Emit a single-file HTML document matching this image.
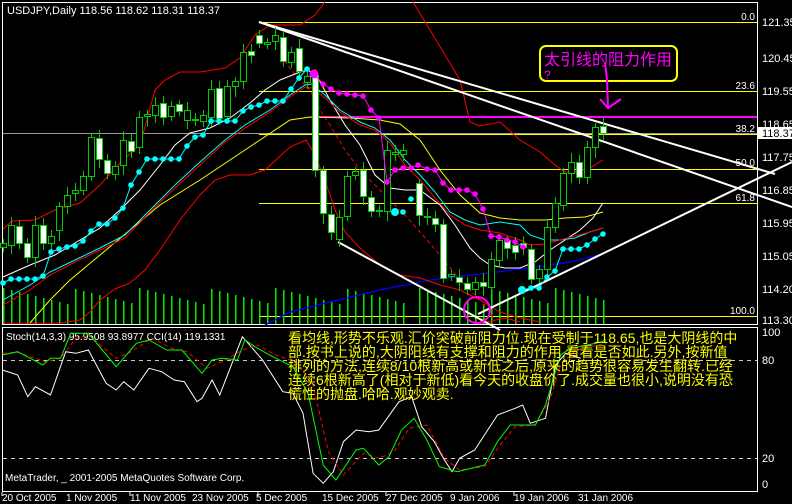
<!DOCTYPE html>
<html><head><meta charset="utf-8"><style>
body{margin:0;background:#000;width:792px;height:504px;overflow:hidden}
svg{display:block}
text{font-family:"Liberation Sans","Noto Sans CJK SC",sans-serif}
</style></head><body>
<svg id="s" width="792" height="504" viewBox="0 0 792 504" xmlns="http://www.w3.org/2000/svg">
<rect width="792" height="504" fill="#000"/>
<rect x="2.5" y="2.5" width="755" height="322" fill="none" stroke="#fff"/>
<rect x="2.5" y="327.5" width="755" height="164" fill="none" stroke="#fff"/>
<line x1="3" y1="133.5" x2="757" y2="133.5" stroke="#999"/>
<g stroke="#ff0" stroke-width="1">
<line x1="259" y1="22.5" x2="757" y2="22.5"/>
<line x1="259" y1="91.5" x2="757" y2="91.5"/>
<line x1="259" y1="134.5" x2="757" y2="134.5"/>
<line x1="259" y1="169.5" x2="757" y2="169.5"/>
<line x1="259" y1="203.5" x2="757" y2="203.5"/>
<line x1="259" y1="316.5" x2="757" y2="316.5"/>
</g>
<g fill="#fff" font-size="10" text-anchor="end">
<text x="755" y="20">0.0</text><text x="755" y="89">23.6</text><text x="755" y="132">38.2</text>
<text x="755" y="166">50.0</text><text x="755" y="201">61.8</text><text x="755" y="314">100.0</text>
</g>
<line x1="318" y1="117" x2="757" y2="117" stroke="#f0f" stroke-width="2"/>
<g id="vol" fill="#0e0"></g>
<polyline fill="none" stroke="#00f" stroke-width="1.3" points="265,325 290,312 330,302 380,290 430,280 480,274 530,268 570,262 603,254"/>
<g fill="none" stroke="#f00" stroke-width="1">
<polyline points="3,229 12,221 35,220 55,210 80,203 100,185 120,163 140,145 155,90 165,80 180,72 200,72 225,68 240,58 255,35 270,25 300,25 315,15 325,2"/>
<polyline points="413,2 430,30 445,55 460,80 470,122 480,126 500,122 520,140 540,152 555,165 565,172 575,172 590,168 603,160"/>
<polyline points="3,323 60,323 80,320 90,312 100,300 115,289 130,283 145,270 160,250 180,220 200,195 215,180 230,175 250,175 265,170 290,147 306,140 315,155 325,180 335,210 345,232 360,248 380,265 400,275 420,278 440,285 460,290 480,300 500,312 520,318 540,322"/>
<polyline points="478,324 505,318 520,322" />
<polyline points="280,55 295,75 310,90 320,110 330,125 345,150 360,170 375,185 390,200 405,215 420,232 440,255 460,280 480,300 495,320" stroke-dasharray="4,3"/>
</g>
<polyline fill="none" stroke="#ff0" points="30,323 50,300 70,280 100,255 130,230 160,205 200,180 230,160 260,140 290,120 310,117 350,118 380,120 400,124 420,140 440,170 460,195 480,213 500,218 520,220 545,220 565,218 585,217 603,212"/>
<polyline fill="none" stroke="#fff" points="3,277 30,265 55,255 80,240 100,228 120,210 140,190 160,165 175,145 190,133 210,128 230,118 250,103 265,90 280,80 300,72 308,70 318,78 330,100 345,125 360,145 375,175 390,188 405,190 420,190 440,205 455,225 470,248 480,258 490,265 505,268 520,268 535,262 550,250 565,240 580,230 593,218 603,203"/>
<polyline fill="none" stroke="#0ff" points="3,300 30,285 50,272 75,260 100,248 125,235 150,210 175,185 200,162 225,140 245,125 270,110 290,95 305,85 312,84 325,95 340,110 360,122 375,128 390,140 405,160 420,175 435,192 450,212 465,220 480,225 500,222 520,225 530,235 545,240 560,240 575,238 590,232 603,228"/>
<polyline fill="none" stroke="#f00" points="3,305 30,290 50,275 75,262 100,250 125,238 150,212 175,188 200,165 225,142 245,128 270,112 290,97 305,87 312,88 325,98 340,112 360,125 375,130 390,143 405,165 420,180 435,198 450,215 465,225 480,230 500,233 520,240 530,245 545,244 560,240 575,236 590,232 603,228"/>
<g stroke="#fff" stroke-width="2" fill="none">
<line x1="259" y1="22" x2="775" y2="174"/>
<line x1="259" y1="22" x2="792" y2="207"/>
<line x1="338" y1="242" x2="500" y2="330"/>
<line x1="478" y1="314" x2="792" y2="162"/>
</g>
<g id="cdl"></g>
<polyline fill="none" stroke="#0ff" id="cyl"/>
<g id="cyd" fill="#0ff"></g>
<polyline fill="none" stroke="#f0f" id="mgl"/>
<g id="mgd" fill="#f0f"></g>
<circle cx="477" cy="310" r="13" fill="none" stroke="#f0f" stroke-width="2"/>
<rect x="540" y="46" width="137" height="35" rx="6" fill="none" stroke="#ff0" stroke-width="2"/>
<text x="544" y="65" fill="#f0f" font-size="16" font-family="Liberation Sans,Noto Sans CJK SC,sans-serif">太引线的阻力作用</text>
<text x="544" y="79" fill="#f0f" font-size="12">?</text>
<polyline fill="none" stroke="#f0f" stroke-width="2" points="605,62 607,80 608,108"/>
<polyline fill="none" stroke="#f0f" stroke-width="2" points="600,99 608,108 621,99"/>
<g fill="#fff" font-size="11">
<text x="762" y="26">121.35</text><text x="762" y="62">120.45</text><text x="762" y="95">119.55</text>
<text x="762" y="128">118.65</text><text x="762" y="161">117.75</text><text x="762" y="194">116.85</text>
<text x="762" y="227">115.95</text><text x="762" y="260">115.05</text><text x="762" y="293">114.20</text>
<text x="762" y="324">113.30</text>
<text x="762" y="336">100</text><text x="762" y="364">80</text><text x="762" y="462">20</text><text x="762" y="488">0</text>
</g>
<rect x="758" y="127" width="34" height="12" fill="#fff"/>
<text x="762" y="137" fill="#000" font-size="11">118.37</text>
<text x="7" y="14" fill="#fff" font-size="11">USDJPY,Daily  118.56 118.62 118.31 118.37</text>
<g stroke="#ccc" stroke-dasharray="4,4"><line x1="3" y1="360.5" x2="757" y2="360.5"/><line x1="3" y1="458.5" x2="757" y2="458.5"/></g>
<text x="6" y="340" fill="#fff" font-size="10">Stoch(14,3,3) 95.9508 93.8977  CCI(14) 119.1331</text>
<polyline fill="none" stroke="#fff" id="cci"/>
<polyline fill="none" stroke="#f00" stroke-dasharray="4,3" id="sd"/>
<polyline fill="none" stroke="#0f0" id="sk"/>
<text x="5" y="481" fill="#fff" font-size="10">MetaTrader, _ 2001-2005 MetaQuotes Software Corp.</text>
<g fill="#ff0" font-size="14" font-family="Liberation Sans,Noto Sans CJK SC,sans-serif">
<text x="288" y="343">看均线,形势不乐观.汇价突破前阻力位.现在受制于118.65,也是大阴线的中</text>
<text x="288" y="357">部.按书上说的,大阴阳线有支撑和阻力的作用,看看是否如此.另外,按新值</text>
<text x="288" y="371">排列的方法,连续8/10根新高或新低之后,原来的趋势很容易发生翻转.已经</text>
<text x="288" y="385">连续6根新高了(相对于新低)看今天的收盘价了.成交量也很小,说明没有恐</text>
<text x="288" y="399">慌性的抛盘.哈哈.观妙观卖.</text>
</g>
<g fill="#fff" font-size="10">
<text x="2" y="501">20 Oct 2005</text><text x="66" y="501">1 Nov 2005</text><text x="130" y="501">11 Nov 2005</text>
<text x="192" y="501">23 Nov 2005</text><text x="256" y="501">5 Dec 2005</text><text x="322" y="501">15 Dec 2005</text>
<text x="386" y="501">27 Dec 2005</text><text x="450" y="501">9 Jan 2006</text><text x="514" y="501">19 Jan 2006</text>
<text x="578" y="501">31 Jan 2006</text>
</g>
<g stroke="#fff"><line x1="2" y1="492" x2="2" y2="496"/><line x1="130" y1="492" x2="130" y2="496"/><line x1="258" y1="492" x2="258" y2="496"/><line x1="386" y1="492" x2="386" y2="496"/><line x1="514" y1="492" x2="514" y2="496"/></g>
</svg>
<script>
var NS="http://www.w3.org/2000/svg";
function el(p,t,a){var e=document.createElementNS(NS,t);for(var k in a)e.setAttribute(k,a[k]);document.getElementById(p).appendChild(e);return e;}
var C=[[3,243,247,0],[11,225,245,0],[19,226,243,1],[27,243,257,1],[35,225,257,0],[43,225,243,1],[51,236,243,0],[59,206,230,0],[67,195,206,0],[75,190,193,0],[83,176,190,0],[91,137,176,0],[99,138,159,1],[107,160,173,1],[115,166,174,0],[123,140,165,0],[131,141,151,1],[139,117,147,0],[147,114,116,0],[155,105,115,0],[163,103,117,1],[171,106,116,0],[179,104,111,1],[187,110,120,0],[195,119,120,0],[203,115,121,0],[211,89,117,0],[219,88,118,1],[227,86,116,0],[235,81,86,0],[243,52,81,0],[251,51,55,1],[259,35,43,1],[267,42,44,0],[275,35,41,0],[283,37,61,1],[291,52,62,0],[299,48,71,1],[307,76,82,0],[315,75,170,1],[323,170,213,1],[331,214,232,1],[339,217,239,0],[347,176,216,0],[355,171,175,0],[363,170,196,1],[371,197,211,1],[379,210,211,0],[387,150,211,0],[395,152,154,0],[403,150,154,0],[419,183,215,1],[427,216,217,0],[435,218,224,1],[443,224,278,1],[451,274,276,0],[459,277,282,1],[467,283,289,1],[475,282,289,0],[483,282,286,1],[491,259,287,0],[499,240,260,0],[507,240,248,1],[515,245,252,1],[523,243,247,1],[531,249,279,1],[539,269,278,0],[547,227,269,0],[555,203,227,0],[563,173,205,0],[571,162,173,0],[579,162,177,1],[587,147,177,0],[595,127,147,0],[603,126,133,1]];
C.forEach(function(c,i){var r=(i*37%11);var t=288+(i*53%17);el("vol","rect",{x:c[0],y:t,width:1.5,height:324-t});
el("cdl","line",{x1:c[0]+.5,x2:c[0]+.5,y1:c[1]-4-r%6,y2:c[2]+5+r%7,stroke:"#0c0"});
el("cdl","rect",{x:c[0]-2.5,y:c[1]+.5,width:6,height:Math.max(1,c[2]-c[1]),fill:c[3]?"#fff":"#000",stroke:"#0c0"});});
var cy=[[3,283],[11,279],[19,279],[27,279],[35,279],[43,276],[51,252],[59,249],[67,247],[75,246],[83,241],[91,231],[99,224],[107,224],[115,218],[123,208],[131,185],[139,172],[147,159],[155,159],[163,159],[171,159],[179,159],[187,146],[195,137],[203,135],[211,121],[219,121],[227,121],[235,121],[243,111],[251,107],[259,105],[267,101],[275,101],[283,101],[291,89],[299,78],[307,69]];
var cy2=[[395,212],[403,212],[411,199]],cy3=[[522,290],[531,288],[539,288],[547,277],[555,271],[563,249],[571,249],[579,249],[587,245],[595,239],[603,234]];
document.getElementById("cyl").setAttribute("points",cy.map(function(p){return p.join(",")}).join(" "));
cy.concat(cy2,cy3).forEach(function(p){el("cyd","circle",{cx:p[0],cy:p[1],r:2.8});});
el("cyd","circle",{cx:395,cy:212,r:4});el("cyd","circle",{cx:522,cy:290,r:4});
el("s","polyline",{points:cy3.map(function(p){return p.join(",")}).join(" "),fill:"none",stroke:"#0ff"});
var mg=[[314,74],[323,84],[331,89],[339,93],[347,94],[355,95],[363,96],[371,110],[379,118],[387,182],[395,170],[403,168],[411,168],[418,165],[427,169],[435,170],[443,183],[451,190],[459,190],[467,190],[475,194],[483,209],[491,236],[499,237],[507,240],[515,242],[523,247]];
document.getElementById("mgl").setAttribute("points",mg.map(function(p){return p.join(",")}).join(" "));
mg.forEach(function(p,i){el("mgd","circle",{cx:p[0],cy:p[1],r:i?2.8:4.5});});
function cv(a){var o=[];for(var i=0;i<a.length;i+=2)o.push((a[i]/1.98).toFixed(1)+","+(325+a[i+1]/3).toFixed(1));return o.join(" ");}
document.getElementById("sk").setAttribute("points",cv([5,90,35,80,60,100,85,120,100,100,120,100,140,25,175,25,230,125,270,55,295,45,330,75,360,75,400,145,420,105,440,100,470,105,485,45,510,70,540,95,580,125,610,205,640,420,665,465,705,375,720,370,750,420,770,395,795,315,820,280,845,345,870,425,905,440,960,420,985,350,1010,300,1060,300,1080,240,1110,90,1130,70,1180,55,1200,45]));
document.getElementById("sd").setAttribute("points",cv([5,85,35,82,60,95,90,110,120,100,150,40,175,30,230,100,260,80,300,40,340,70,370,80,410,130,440,110,480,75,510,60,545,90,585,110,620,180,650,380,680,450,720,385,750,400,780,380,810,310,845,300,880,400,910,435,960,425,990,360,1020,305,1060,300,1090,220,1110,120,1140,75,1200,55]));
document.getElementById("cci").setAttribute("points",cv([5,135,35,150,55,215,70,185,100,210,130,80,150,85,175,75,210,175,230,195,245,170,265,195,295,130,320,140,345,165,365,170,390,230,400,220,420,165,435,210,480,35,520,105,560,200,580,205,600,265,620,445,640,475,660,440,680,350,705,315,730,320,750,315,790,230,815,215,835,305,860,350,880,405,895,440,910,400,940,375,985,270,1020,250,1035,240,1050,295,1080,280,1100,120,1120,85,1150,100]));
</script>
</body></html>
